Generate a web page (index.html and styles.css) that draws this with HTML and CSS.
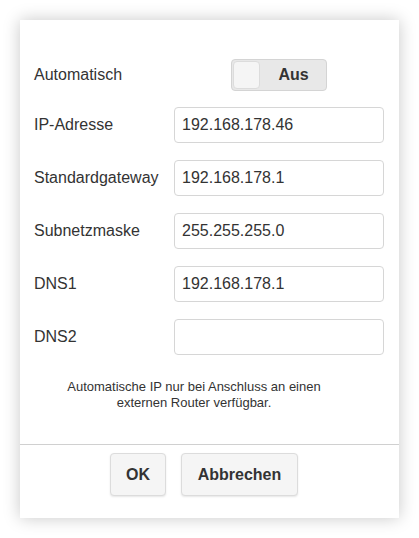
FILE: index.html
```html
<!DOCTYPE html>
<html lang="de">
<head>
<meta charset="utf-8">
<link rel="stylesheet" href="styles.css">
</head>
<body>
<div class="dialog">
  <div class="form">
    <div class="row row-toggle">
      <span class="label">Automatisch</span>
      <div class="field field-center">
        <div class="toggle"><span class="knob"></span><span class="toggle-text">Aus</span></div>
      </div>
    </div>
    <div class="row">
      <span class="label">IP-Adresse</span>
      <div class="field"><input class="input" type="text" value="192.168.178.46"></div>
    </div>
    <div class="row">
      <span class="label">Standardgateway</span>
      <div class="field"><input class="input" type="text" value="192.168.178.1"></div>
    </div>
    <div class="row">
      <span class="label">Subnetzmaske</span>
      <div class="field"><input class="input" type="text" value="255.255.255.0"></div>
    </div>
    <div class="row">
      <span class="label">DNS1</span>
      <div class="field"><input class="input" type="text" value="192.168.178.1"></div>
    </div>
    <div class="row">
      <span class="label">DNS2</span>
      <div class="field"><input class="input" type="text" value=""></div>
    </div>
  </div>
  <p class="note">Automatische IP nur bei Anschluss an einen<br>externen Router verfügbar.</p>
  <div class="footer">
    <button class="btn btn-ok">OK</button>
    <button class="btn btn-cancel">Abbrechen</button>
  </div>
</div>
</body>
</html>
```

FILE: styles.css
```css
html, body {
  margin: 0;
  padding: 0;
  background: #ffffff;
}
body {
  font-family: "Liberation Sans", Arial, sans-serif;
  color: #333333;
}
.dialog {
  margin: 20px;
  width: 379px;
  height: 498px;
  box-sizing: border-box;
  background: #ffffff;
  box-shadow: 0 0 16px rgba(0, 0, 0, 0.22);
  display: flex;
  flex-direction: column;
}
.form {
  padding: 39px 15px 0 14px;
  display: flex;
  flex-direction: column;
  gap: 17px;
}
.row {
  display: flex;
  align-items: center;
  height: 36px;
}
.row-toggle {
  height: 32px;
  margin-bottom: -1px;
}
.label {
  width: 140px;
  font-size: 16px;
  line-height: 20px;
}
.field {
  flex: 1;
  display: flex;
}
.field-center {
  justify-content: center;
}
.input {
  width: 100%;
  height: 36px;
  box-sizing: border-box;
  border: 1px solid #d6d6d6;
  border-radius: 4px;
  padding: 0 7px;
  font-family: "Liberation Sans", Arial, sans-serif;
  font-size: 16px;
  color: #333333;
  background: #ffffff;
  outline: none;
}
.toggle {
  width: 96px;
  height: 32px;
  box-sizing: border-box;
  border: 1px solid #d4d4d4;
  border-radius: 4px;
  background: #e8e8e8;
  display: flex;
  align-items: center;
  padding: 1px;
}
.knob {
  width: 27px;
  height: 28px;
  box-sizing: border-box;
  border: 1px solid #dcdcdc;
  border-radius: 4px;
  background: #f5f5f5;
}
.toggle-text {
  flex: 1;
  text-align: center;
  font-weight: bold;
  font-size: 16px;
  color: #333333;
  padding-left: 2px;
}
.note {
  margin: 24px 0 33px 14px;
  width: 320px;
  text-align: center;
  font-size: 13px;
  line-height: 16px;
}
.footer {
  border-top: 1px solid #d0d0d0;
  padding: 8px 11px 0 0;
  display: flex;
  justify-content: center;
  gap: 15px;
}
.btn {
  height: 43px;
  box-sizing: border-box;
  border: 1px solid #dcdcdc;
  border-radius: 4px;
  background: #f5f5f5;
  box-shadow: 0 1px 2px rgba(0, 0, 0, 0.1);
  font-family: "Liberation Sans", Arial, sans-serif;
  font-weight: bold;
  font-size: 16px;
  color: #333333;
  padding: 0;
}
.btn-ok {
  width: 56px;
}
.btn-cancel {
  width: 117px;
}
```
